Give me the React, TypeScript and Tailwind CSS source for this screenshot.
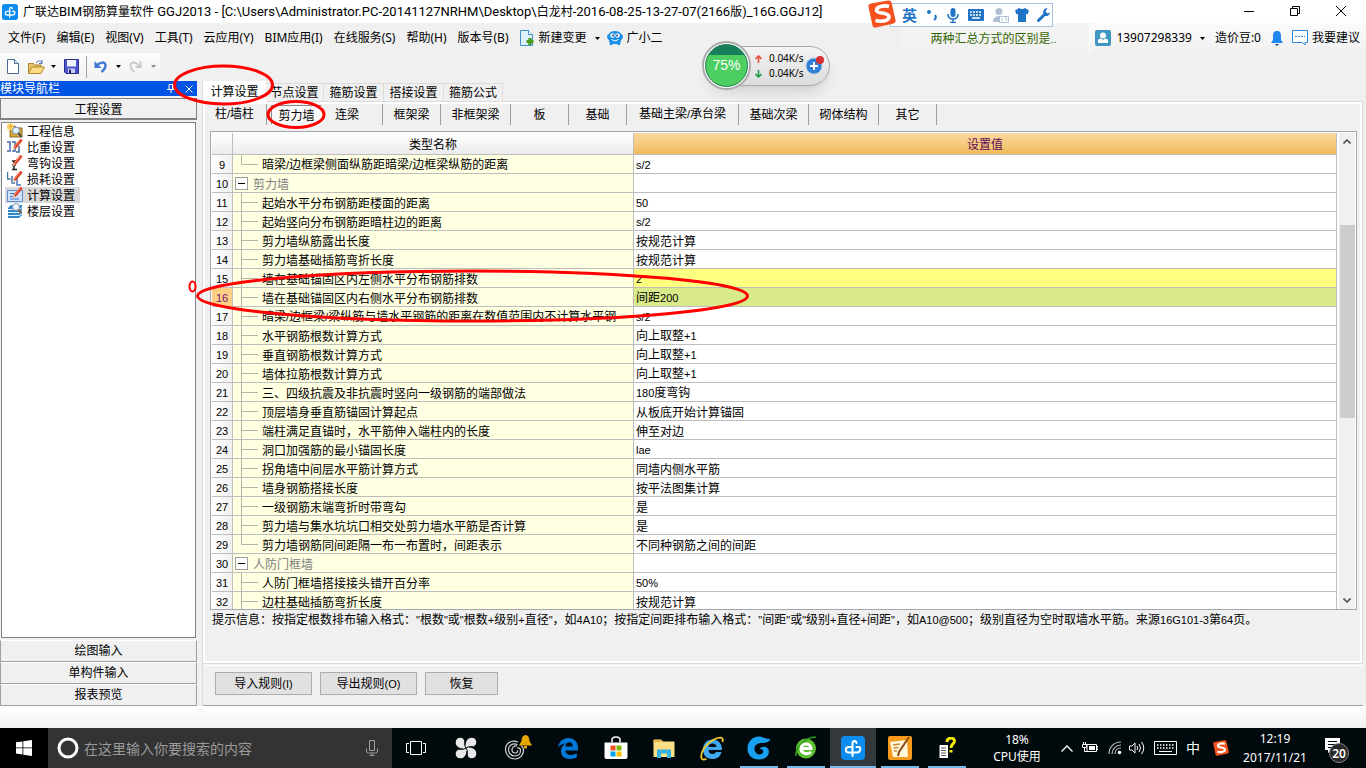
import React from "react";

/* ---------- text helpers ---------- */

const grid = "font-['Noto_Sans_CJK_SC',sans-serif] text-[12px]";
const ui = "font-['Noto_Sans','Noto_Sans_CJK_SC',sans-serif] text-[12px]";

/** Mixed text: Latin runs get their own face and size beside the Han characters. */
function T({ children, latin = "font-['Liberation_Sans',sans-serif] text-[11px]" }: { children: string; latin?: string }) {
  const parts = children.split(/([\x20-\x7e]+)/);
  return (
    <>
      {parts.map((p, i) =>
        i % 2 ? (
          <span key={i} className={latin}>
            {p}
          </span>
        ) : (
          p
        ),
      )}
    </>
  );
}

/* ---------- data ---------- */

const menus = ["文件(F)", "编辑(E)", "视图(V)", "工具(T)", "云应用(Y)", "BIM应用(I)", "在线服务(S)", "帮助(H)", "版本号(B)"];

type Row = { n: number; name: string; value: string; kind?: "group" | "last" };

const rows: Row[] = [
  { n: 9, name: "暗梁/边框梁侧面纵筋距暗梁/边框梁纵筋的距离", value: "s/2", kind: "last" },
  { n: 10, name: "剪力墙", value: "", kind: "group" },
  { n: 11, name: "起始水平分布钢筋距楼面的距离", value: "50" },
  { n: 12, name: "起始竖向分布钢筋距暗柱边的距离", value: "s/2" },
  { n: 13, name: "剪力墙纵筋露出长度", value: "按规范计算" },
  { n: 14, name: "剪力墙基础插筋弯折长度", value: "按规范计算" },
  { n: 15, name: "墙在基础锚固区内左侧水平分布钢筋排数", value: "2" },
  { n: 16, name: "墙在基础锚固区内右侧水平分布钢筋排数", value: "间距200" },
  { n: 17, name: "暗梁/边框梁/梁纵筋与墙水平钢筋的距离在数值范围内不计算水平钢", value: "s/2" },
  { n: 18, name: "水平钢筋根数计算方式", value: "向上取整+1" },
  { n: 19, name: "垂直钢筋根数计算方式", value: "向上取整+1" },
  { n: 20, name: "墙体拉筋根数计算方式", value: "向上取整+1" },
  { n: 21, name: "三、四级抗震及非抗震时竖向一级钢筋的端部做法", value: "180度弯钩" },
  { n: 22, name: "顶层墙身垂直筋锚固计算起点", value: "从板底开始计算锚固" },
  { n: 23, name: "端柱满足直锚时，水平筋伸入端柱内的长度", value: "伸至对边" },
  { n: 24, name: "洞口加强筋的最小锚固长度", value: "lae" },
  { n: 25, name: "拐角墙中间层水平筋计算方式", value: "同墙内侧水平筋" },
  { n: 26, name: "墙身钢筋搭接长度", value: "按平法图集计算" },
  { n: 27, name: "一级钢筋末端弯折时带弯勾", value: "是" },
  { n: 28, name: "剪力墙与集水坑坑口相交处剪力墙水平筋是否计算", value: "是" },
  { n: 29, name: "剪力墙钢筋同间距隔一布一布置时，间距表示", value: "不同种钢筋之间的间距", kind: "last" },
  { n: 30, name: "人防门框墙", value: "", kind: "group" },
  { n: 31, name: "人防门框墙搭接接头错开百分率", value: "50%" },
  { n: 32, name: "边柱基础插筋弯折长度", value: "按规范计算" },
];

const members: { label: string; w: string }[] = [
  { label: "框架梁", w: "w-[58px]" },
  { label: "非框架梁", w: "w-[70px]" },
  { label: "板", w: "w-[58px]" },
  { label: "基础", w: "w-[58px]" },
  { label: "基础主梁/承台梁", w: "w-[112px]" },
  { label: "基础次梁", w: "w-[70px]" },
  { label: "砌体结构", w: "w-[70px]" },
  { label: "其它", w: "w-[58px]" },
];

/* ---------- icons ---------- */

function GgjIcon({ className }: { className: string }) {
  return (
    <svg viewBox="0 0 24 24" className={className}>
      <rect width="24" height="24" rx="4" fill="#0d8cf0" />
      <g fill="none" stroke="#fff" strokeWidth="2" strokeLinecap="round">
        <path d="M15.500 7C15 4.200 11.500 4.200 11.500 7.500V20" />
        <path d="M11.500 11H7.500C4 11 4 16.500 7.500 16.500H16C19.500 16.500 20 12.500 18.500 11H15.500" />
      </g>
    </svg>
  );
}

function Caret({ color = "#000" }: { color?: string }) {
  return (
    <svg viewBox="0 0 5 3" className="h-[3px] w-[5px] shrink-0">
      <path d="M0 0h5L2.500 3z" fill={color} />
    </svg>
  );
}

function Pen() {
  return (
    <>
      <path d="M14.500 0.500L7.500 9" stroke="#e23c22" strokeWidth="3" />
      <path d="M13.500 0.500L7 8.500" stroke="#ff9a7c" strokeWidth="1" />
      <path d="M8.500 9.500L5 12l1.500-4z" fill="#e8c69a" />
    </>
  );
}

function SIcon({ className }: { className: string }) {
  return (
    <svg viewBox="0 0 28 28" className={className}>
      <path d="M3 3.500L20 0.500c2-.3 3 .5 3.500 2L27.500 20c.4 2-.4 3-2 3.500L8 27.500c-2 .4-3-.3-3.500-2L.5 7C0 5 1 4 3 3.500z" fill="#f4511e" />
      <path d="M21 6.500C16 5 8 6.500 8.500 10.500c.5 3.500 12 1.500 12.500 6 .4 4.500-7 5.500-13.500 4" fill="none" stroke="#fff" strokeWidth="3.600" />
    </svg>
  );
}

const navItems: { label: string; icon: React.ReactNode }[] = [
  {
    label: "工程信息",
    icon: (
      <>
        <path d="M3 3h5l1 2h6v9H3z" fill="#d9a63c" stroke="#8a6a20" />
        <path d="M0 1h7v6H0z" fill="#fbe89a" />
        <path d="M3.500 0v7M0 3.500h7M1 1l5 5M6 1L1 6" stroke="#f0b93a" />
        <circle cx="9" cy="7.500" r="3.500" fill="#dff0ff" stroke="#6f8fb5" />
        <path d="M11.500 10l3 4" stroke="#4a4a4a" strokeWidth="2" />
      </>
    ),
  },
  {
    label: "比重设置",
    icon: (
      <>
        <path d="M0 3h3v9H0M5 3h3v9H5M9 13h3V7" fill="none" stroke="#3f68a8" strokeWidth="1.500" />
        <Pen />
      </>
    ),
  },
  {
    label: "弯钩设置",
    icon: (
      <>
        <path d="M5 6h4M7 6v8M5 14.500h5M5 10h4" fill="none" stroke="#222" strokeWidth="1.500" />
        <Pen />
      </>
    ),
  },
  {
    label: "损耗设置",
    icon: (
      <>
        <path d="M0.500 1v7h3M5 5v7h3M10 8v6h4" fill="none" stroke="#4a74b4" strokeWidth="1.500" />
        <Pen />
      </>
    ),
  },
  {
    label: "计算设置",
    icon: (
      <>
        <path d="M0.500 3.500h15v11H.5z" fill="#cfe2fb" stroke="#5c8bd6" />
        <path d="M3 6.500h5M3 9.500h4M3 12h9" stroke="#3f74c8" />
        <Pen />
      </>
    ),
  },
  {
    label: "楼层设置",
    icon: (
      <>
        <path d="M4 2h11v10l-3 3H1V5z" fill="#2f86c8" />
        <path d="M1 6.500h11l3-2M1 9.500h11l3-2M1 12.500h11l3-2" fill="none" stroke="#dff2ff" />
        <circle cx="9" cy="4" r="3.500" fill="#e8f4ff" stroke="#7f97b0" />
        <path d="M11.500 7l3 3" stroke="#8a5a2a" strokeWidth="2" />
      </>
    ),
  },
];

/* ---------- window chrome ---------- */

function TitleBar() {
  return (
    <header className="flex h-[23px] shrink-0 items-center bg-white pl-[2px]">
      <GgjIcon className="size-4" />
      <h1 className={`${ui} ml-[5px] whitespace-nowrap leading-[20px]`}>
        <T latin="font-['Roboto',sans-serif] text-[13px]">
          {"广联达BIM钢筋算量软件 GGJ2013 - [C:\\Users\\Administrator.PC-20141127NRHM\\Desktop\\白龙村-2016-08-25-13-27-07(2166版)_16G.GGJ12]"}
        </T>
      </h1>
      <div className="ml-auto flex -translate-y-px">
        <button aria-label="最小化" className="flex h-[20px] w-[46px] items-center justify-center">
          <svg viewBox="0 0 10 10" className="size-[10px]"><path d="M0 5.500h10" stroke="#000" /></svg>
        </button>
        <button aria-label="还原" className="flex h-[20px] w-[46px] items-center justify-center">
          <svg viewBox="0 0 10 10" className="size-[10px]"><path d="M.5 2.500h7v7h-7zM2.500 2.500v-2h7v7h-2" fill="none" stroke="#000" /></svg>
        </button>
        <button aria-label="关闭" className="mr-[2px] flex h-[20px] w-[46px] items-center justify-center">
          <svg viewBox="0 0 10 10" className="size-[10px]"><path d="M0 0l10 10M10 0L0 10" stroke="#000" /></svg>
        </button>
      </div>
    </header>
  );
}

function MenuBar() {
  return (
    <nav className={`${ui} flex h-[30px] shrink-0 items-center whitespace-nowrap pl-2 leading-[28px]`}>
      <div className="flex gap-[11px]">
        {menus.map((m) => (
          <button key={m}>{m}</button>
        ))}
      </div>
      <button className="ml-[11px] flex items-center">
        <svg viewBox="0 0 14 16" className="h-4 w-[14px]">
          <path d="M.5.5h8l4 4v11H.5z" fill="#dff1fc" stroke="#3f8fc4" />
          <path d="M8.500.5v4h4" fill="#fff" stroke="#3f8fc4" />
          <path d="M10 8v7M6.500 11.500h7" stroke="#4a9a1a" strokeWidth="3.200" />
        </svg>
        <span className="ml-[5px] mr-[8px]">新建变更</span>
        <Caret />
      </button>
      <button className="ml-[7px] flex items-center gap-1">
        <svg viewBox="0 0 16 16" className="size-4">
          <path d="M2 4C3 0 13 0 14 4c3 1 2 5 0 6l-1 5q-2 .5-3-1H6q-1 1.500-3 1l-1-5C0 9-1 5 2 4z" fill="#1a8fe8" />
          <circle cx="5.500" cy="5.500" r="2.200" fill="#fff" /><circle cx="10.500" cy="5.500" r="2.200" fill="#fff" />
          <circle cx="6" cy="5.500" r="1" fill="#0b3f78" /><circle cx="10" cy="5.500" r="1" fill="#0b3f78" />
          <path d="M4.500 9.500q3.500 3 7 0" fill="none" stroke="#fff" />
        </svg>
        广小二
      </button>
      <div className="ml-auto flex self-stretch">
        <div className={`${grid} flex w-[188px] items-center bg-gradient-to-b from-[#f4f4f4] to-[#f1f1f1] pl-[29px] text-[#336600]`}>
          <a href="#tip"><T>两种汇总方式的区别是..</T></a>
        </div>
        <div className="flex items-center rounded-l border-l border-white bg-gradient-to-b from-[#fbfbfb] to-[#f0f0f0] pl-[5px] pr-[6px]">
          <svg viewBox="0 0 16 16" className="size-4">
            <rect width="16" height="16" rx="2" fill="#3f97c4" />
            <circle cx="8" cy="5.500" r="3" fill="#fff" />
            <path d="M3 13V9.500l3-1 2 1.500 2-1.500 3 1V13z" fill="#fff" />
          </svg>
          <button className="ml-[5px] flex items-center gap-2"><span>13907298339</span><Caret /></button>
          <span className="ml-[10px]">造价豆:0</span>
          <svg viewBox="0 0 12 15" className="ml-[10px] h-[15px] w-3">
            <path d="M6 0C3 0 2 2 2 5v4l-2 3h12l-2-3V5c0-3-1-5-4-5z" fill="#1e88f0" />
            <path d="M4 13h4l-2 2z" fill="#0a3f80" />
          </svg>
          <button className="ml-[9px] flex items-center gap-[4px]">
            <svg viewBox="0 0 16 16" className="size-4">
              <path d="M.5.500h15v12H13v2.500l-2.500-2.500H.5z" fill="#fff" stroke="#2f86d8" />
              <path d="M3 6.500h10" stroke="#2f86d8" strokeDasharray="2 1" />
            </svg>
            我要建议
          </button>
        </div>
      </div>
    </nav>
  );
}

function ToolBar() {
  return (
    <div className="flex h-[28px] shrink-0">
      <div className="flex h-[27px] w-[160px] items-center bg-gradient-to-b from-[#fbfbfb] to-[#f2f2f2] pl-[7px]">
        <button aria-label="新建">
          <svg viewBox="0 0 12 15" className="h-[15px] w-3"><path d="M.5.5h7l4 4v10H.5z" fill="#fff" stroke="#4a6a94" /><path d="M7.500.5v4h4" fill="#dbe8f6" stroke="#4a6a94" /></svg>
        </button>
        <button aria-label="打开" className="ml-[9px] flex items-center gap-[6px]">
          <svg viewBox="0 0 17 14" className="h-[14px] w-[17px]">
            <path d="M.5 13.500v-10h5l1 1.500H13v2" fill="#e8c46a" stroke="#a8842c" />
            <path d="M.5 13.500L4 7h12.500L13 13.500z" fill="#fadc86" stroke="#b48a2c" />
            <path d="M8 3c2-3 5-2.500 6 0m0-3v3.500h-3" fill="none" stroke="#4a74b0" />
          </svg>
          <Caret />
        </button>
        <button aria-label="保存" className="ml-[8px]">
          <svg viewBox="0 0 15 15" className="size-[15px]">
            <path d="M.5.5h14v14H2l-1.500-1.500z" fill="#4a55d0" stroke="#2a2f90" />
            <path d="M3 1h9v6.500H3z" fill="#f0f4fc" /><path d="M4 9.500h7V14H4z" fill="#c9cff0" /><path d="M5 10.500h2V14H5z" fill="#22286a" />
          </svg>
        </button>
        <div className="mx-[7px] h-[22px] w-px bg-[#a0a0a0]" />
        <button aria-label="撤销" className="flex items-center gap-[9px]">
          <svg viewBox="0 0 13 13" className="size-[13px]">
            <path d="M3 5.500C5.500 2.500 11 1 11.500 5c.2 3-1.500 5-4 7" fill="none" stroke="#3f78d0" strokeWidth="2.400" />
            <path d="M.5 1v7h7z" fill="#3f78d0" />
          </svg>
          <Caret />
        </button>
        <button aria-label="重做" className="ml-[8px] flex items-center gap-[9px]">
          <svg viewBox="0 0 13 13" className="size-[13px]">
            <path d="M11.500 1v6h-5M11 6.500C8 2 2 1 1.500 5c-.3 3 1.500 5 4 7" fill="none" stroke="#c8c8c8" strokeWidth="1.800" />
          </svg>
          <Caret color="#8a8a8a" />
        </button>
      </div>
    </div>
  );
}

/* ---------- left navigation ---------- */

const barButton = "h-[22px] w-full shrink-0 border border-[#a0a0a0] border-t-white bg-[#f0f0f0] pb-[3px] text-center leading-[16px]";

function SideNav() {
  return (
    <aside className={`${grid} flex w-[197px] shrink-0 flex-col leading-4`}>
      <div className="flex h-[15px] shrink-0 items-center bg-[#0054e3] pr-1 leading-[14px] text-white">
        <span className="h-[15px]">模块导航栏</span>
        <button aria-label="固定" className="ml-auto">
          <svg viewBox="0 0 8 9" className="h-[9px] w-2"><path d="M2 .5h4v5H2zM0 5.500h8M4 5.500V9M5.500.5v5" fill="none" stroke="#fff" /></svg>
        </button>
        <button aria-label="关闭导航" className="ml-[10px]">
          <svg viewBox="0 0 8 8" className="size-2"><path d="M.5.5l7 7M7.500.5l-7 7" stroke="#fff" /></svg>
        </button>
      </div>
      <button className="mt-[2px] h-[22px] w-full shrink-0 border border-[#808080] border-b-2 bg-[#f0f0f0] leading-[19px]">工程设置</button>
      <ul className="mx-[1px] mt-[2px] mb-[2px] min-h-0 flex-1 border border-[#808080] bg-white pl-[3px]">
        {navItems.map((it) => (
          <li key={it.label}>
            <a href="#nav" className={`flex h-4 w-[75px] items-center gap-[4px] pl-[2px] ${it.label === "计算设置" ? "bg-[#d9d9d9]" : ""}`}>
              <svg viewBox="0 0 16 16" className="size-4 shrink-0">{it.icon}</svg>
              <span className="whitespace-nowrap">{it.label}</span>
            </a>
          </li>
        ))}
      </ul>
      <button className={barButton}>绘图输入</button>
      <button className={barButton}>单构件输入</button>
      <button className={barButton}>报表预览</button>
    </aside>
  );
}

/* ---------- settings table ---------- */

function TreeCell({ row }: { row: Row }) {
  if (row.kind === "group") {
    return (
      <div className="flex h-[18px] items-center pl-[2px] text-[#808080]">
        <button aria-label="折叠" className="mr-[5px] flex size-[13px] items-center justify-center border border-[#a0a0a0] bg-white">
          <span className="h-px w-[7px] bg-black" />
        </button>
        {row.name}
      </div>
    );
  }
  return (
    <div className="flex h-[18px] items-center pl-2">
      <svg viewBox="0 0 17 18" className="mr-1 h-[18px] w-[17px] shrink-0">
        <path d={row.kind === "last" ? "M.5 0v9.500H17" : "M.5 0v18M.5 9.500H17"} fill="none" stroke="#b4b4a8" />
      </svg>
      <span className="overflow-hidden"><T>{row.name}</T></span>
    </div>
  );
}

function SettingsTable() {
  const line = "border-r border-b border-[#bebebe] p-0";
  return (
    <div className="flex min-h-0 flex-1 border border-[#a3a6ad] bg-white pt-px pl-px">
      <div className="min-w-0 flex-1 overflow-hidden">
        <table className={`${grid} w-full table-fixed border-separate border-spacing-0 whitespace-nowrap leading-[15px]`}>
          <colgroup>
            <col className="w-[21px]" />
            <col className="w-[401px]" />
            <col />
          </colgroup>
          <thead>
            <tr className="h-[22px]">
              <th className={`${line} bg-gradient-to-b from-white to-[#ececec]`} />
              <th className={`${line} bg-gradient-to-b from-white to-[#ececec] font-normal`}>类型名称</th>
              <th className={`${line} bg-gradient-to-b from-[#fad89f] to-[#f2bc5a] font-normal text-[#5a0a5a]`}>设置值</th>
            </tr>
          </thead>
          <tbody>
            {rows.map((r) => (
              <tr key={r.n} className="h-[19px]">
                <td className={`${line} text-center ${r.n === 16 ? "bg-[#ffcf86] text-[#6a1a6a]" : "bg-gradient-to-r from-white to-[#f0f0f0]"}`}>
                  <T>{String(r.n)}</T>
                </td>
                <td className={`${line} bg-[#ffffe1]`}><TreeCell row={r} /></td>
                <td className={`${line} pl-[2px] ${r.n === 15 ? "bg-[#ffff80]" : r.n === 16 ? "bg-[#d9ea8a]" : ""}`}>
                  <T>{r.value}</T>
                </td>
              </tr>
            ))}
          </tbody>
        </table>
      </div>
      <div className="ml-[2px] mr-px flex w-4 shrink-0 flex-col items-center bg-[#f0f0f0]">
        <button aria-label="向上滚动" className="flex h-[17px] items-center">
          <svg viewBox="0 0 8 5" className="h-[5px] w-2"><path d="M.5 4.500L4 1l3.500 3.500" fill="none" stroke="#505050" strokeWidth="1.600" /></svg>
        </button>
        <div className="mt-[75px] h-[193px] w-[15px] bg-[#cdcdcd]" />
        <button aria-label="向下滚动" className="mt-auto flex h-[17px] items-center">
          <svg viewBox="0 0 8 5" className="h-[5px] w-2"><path d="M.5.5L4 4l3.500-3.500" fill="none" stroke="#505050" strokeWidth="1.600" /></svg>
        </button>
      </div>
    </div>
  );
}

function Workspace() {
  const sep = "h-[21px] border-r border-[#a0a0a0]";
  const action = "h-[23px] border border-[#adadad] bg-[#e1e1e1] pb-[1px] leading-[18px]";
  return (
    <main className={`${grid} ml-[5px] flex min-w-0 flex-1 flex-col border-l border-[#dcdcdc] pr-[3px]`}>
      <div className="flex h-5 shrink-0 items-end whitespace-nowrap leading-[16px]">
        <button className="z-10 -mb-[2px] h-[22px] w-[63px] bg-white pb-[3px]">计算设置</button>
        {["节点设置", "箍筋设置", "搭接设置", "箍筋公式"].map((t, i) => (
          <button key={t} className={`h-[18px] border-t border-r border-[#dcdcdc] pb-[1px] ${i === 0 ? "w-[58px]" : i === 3 ? "w-[59px]" : "w-[60px]"}`}>{t}</button>
        ))}
      </div>
      <section className="flex min-h-0 flex-1 flex-col border border-l-0 border-[#dcdcdc]">
        <div className="flex min-h-0 flex-1 flex-col border-2 border-white pb-[32px]">
          <div className="flex shrink-0 items-center whitespace-nowrap text-center leading-[18px]">
            <button className={`${sep} w-[62px] pr-[2px] pb-[2px]`}><T>柱/墙柱</T></button>
            <button className="mx-[4px] h-[20px] w-[51px] border border-[#888] border-r-white border-b-white bg-[#f8f8f8] leading-[18px]">剪力墙</button>
            <button className={`${sep} w-[57px] pr-[14px] pb-[2px]`}>连梁</button>
            {members.map((m) => (
              <button key={m.label} className={`${sep} ${m.w} pb-[2px]`}><T>{m.label}</T></button>
            ))}
          </div>
          <div className="flex min-h-0 flex-1 flex-col pt-[6px] pr-[3px] pl-[5px]">
            <SettingsTable />
            <p className="shrink-0 whitespace-nowrap pl-[2px] leading-[17px]">
              <T>{'提示信息：按指定根数排布输入格式："根数"或"根数+级别+直径"，如4A10；按指定间距排布输入格式："间距"或"级别+直径+间距"，如A10@500；级别直径为空时取墙水平筋。来源16G101-3第64页。'}</T>
            </p>
          </div>
        </div>
      </section>
      <div className="mt-px flex h-[41px] shrink-0 items-start gap-2 border-t border-b border-t-white border-b-[#a0a0a0] pt-[6px] pl-[12px]">
        <button className={`${action} w-[97px]`}><T>导入规则(I)</T></button>
        <button className={`${action} w-[97px]`}><T>导出规则(O)</T></button>
        <button className={`${action} w-[73px]`}>恢复</button>
      </div>
    </main>
  );
}

/* ---------- taskbar ---------- */

function Slot({ label, w, state, children }: { label: string; w: string; state?: "open" | "active"; children: React.ReactNode }) {
  return (
    <button aria-label={label} className={`flex h-full shrink-0 flex-col items-center ${w} ${state === "active" ? "bg-[#33393c]" : ""}`}>
      <span className="flex flex-1 items-center">{children}</span>
      <span className={`-mt-[2px] h-[2px] ${state === "active" ? "w-full bg-[#76b9ed]" : state === "open" ? "w-[38px] bg-[#76b9ed]" : ""}`} />
    </button>
  );
}

function Taskbar() {
  return (
    <footer className={`${ui} flex h-10 shrink-0 items-center overflow-hidden bg-[#00090c] text-white`}>
      <button aria-label="开始" className="flex h-full w-12 shrink-0 items-center justify-center bg-black">
        <svg viewBox="0 0 16 16" className="size-4"><path d="M0 2.300l6.500-.9v6.100H0zM7.300 1.300L16 0v7.500H7.300zM0 8.300h6.500v6.200L0 13.600zM7.300 8.300H16V16l-8.700-1.300z" fill="#fff" /></svg>
      </button>
      <label className="flex h-full w-[344px] shrink-0 items-center bg-[#333] pr-[14px] pl-[9px]">
        <svg viewBox="0 0 22 22" className="size-[22px] shrink-0"><circle cx="11" cy="11" r="9" fill="none" stroke="#fff" strokeWidth="3" /></svg>
        <input aria-label="搜索" placeholder="在这里输入你要搜索的内容" className="ml-[5px] min-w-0 flex-1 bg-transparent text-[14px] placeholder:text-[#9a9a9a] outline-none" />
        <svg viewBox="0 0 12 16" className="h-4 w-3 shrink-0"><path d="M3.500.5h5v10h-5zM.5 8.500v2.500q0 2 2 2h7q2 0 2-2V8.500M6 13v2.500M3.500 15.500h5" fill="none" stroke="#a0a0a0" /></svg>
      </label>
      <Slot label="任务视图" w="w-12">
        <svg viewBox="0 0 20 14" className="h-[14px] w-5"><path d="M4.500.5h11v13h-11zM3 2.500H.5v9H3M17 2.500h2.500v9H17" fill="none" stroke="#fff" /></svg>
      </Slot>
      <Slot label="风扇" w="w-[52px]">
        <svg viewBox="0 0 22 22" className="size-[22px]">
          {[0, 90, 180, 270].map((a) => (
            <path key={a} transform={`rotate(${a} 11 11)`} d="M10.800 10.800C8.500 12 5.500 11.500 3.500 10.200 1.500 9 .7 7.500.7 5.200.7 2.500 2.500.7 5.200.7 8 .7 9.300 2.500 9.500 4.800c.2 2.400 0 4.300 1.300 6z" fill="#e8e8e8" />
          ))}
          <path d="M8 8h6v6H8z" fill="#e8e8e8" />
          <path d="M11 11C9 8.500 9.500 5 10.700 2M11 11c2.500-2 6-1.500 9-.3M11 11c2 2.500 1.500 6 .3 9M11 11c-2.500 2-6 1.500-9 .3" fill="none" stroke="#00090c" />
        </svg>
      </Slot>
      <Slot label="浏览器提醒" w="w-[52px]">
        <svg viewBox="0 0 28 26" className="h-[26px] w-7">
          <g fill="none" stroke="#d8d8d8" strokeWidth="1.200">
            <path d="M14 7C7 4 1.500 9 1.500 14.500S6 24 11 24s8.500-4 8.500-8.500c0-3-1-4-2.500-4.500" />
            <path d="M13.500 9.500C8 7.500 4.500 11 4.500 14.800c0 3.500 3 6.200 6.500 6.200s5.500-2.500 5.500-5.500c0-2-1.500-3-3.500-2.500M13 11c-3-.5-5 1.500-5 3.800 0 2 1.500 3.200 3.200 3.200 1.500 0 2.800-1 2.300-2.500" />
          </g>
          <path d="M21.500 0c-3 .5-4 3-4 6l-2.500 4.500h13L25.500 6c0-3-1-5.500-4-6zM20 11h3v2.500h-3z" fill="#e5a800" />
        </svg>
      </Slot>
      <Slot label="Edge" w="w-12">
        <svg viewBox="0 0 20 21" className="h-[21px] w-5"><path d="M0 9.500C1 3.500 5 0 10.500 0 16.500 0 20 4.500 20 9.500v3H7.300c.2 3 2.700 4.500 5.700 4.500 2 0 4-.6 5.800-1.700v4C17 20.500 14.500 21 12 21c-5.500 0-9-3-9-8 0-3.500 2-6 4.500-7.500C4.500 5.700 1.500 7 0 9.500zM7.500 8.500h7.200c0-2.500-1-4.200-3.400-4.200-2.300 0-3.500 2-3.800 4.200z" fill="#0078d7" /></svg>
      </Slot>
      <Slot label="应用商店" w="w-12">
        <svg viewBox="0 0 24 24" className="size-6">
          <path d="M8 6.500V4q0-3 4-3t4 3v2.500" fill="none" stroke="#fff" strokeWidth="1.500" />
          <path d="M.5 6.500h23V21q0 2-2 2h-19q-2 0-2-2z" fill="#fff" />
          <path d="M6.500 9.500h5v5h-5z" fill="#f25022" /><path d="M12.500 9.500h5v5h-5z" fill="#7fba00" /><path d="M6.500 15.500h5v5h-5z" fill="#00a4ef" /><path d="M12.500 15.500h5v5h-5z" fill="#ffb900" />
        </svg>
      </Slot>
      <Slot label="资源管理器" w="w-12">
        <svg viewBox="0 0 22 19" className="h-[19px] w-[22px]">
          <path d="M.5 1q0-.5.5-.5h7L10 2.500h11q.5 0 .5.500v15H.5z" fill="#fbdf86" /><path d="M.5 1h8v2h-8z" fill="#e8b93e" />
          <path d="M4 10.500h14V19h-4v-4.500H8V19H4z" fill="#35b3e6" />
        </svg>
      </Slot>
      <Slot label="IE" w="w-12">
        <svg viewBox="0 0 24 25" className="h-[25px] w-6">
          <path d="M12.500 3.500c5.500 0 9.500 4 9.500 10.500H8.500c.3 3 2 4 4 4 1.700 0 3-.7 3.500-2h5.500c-1 4.500-4.500 7-9 7-6 0-9.500-4-9.500-9.500 0-6 4-10 9.500-10zM8.500 11h8c-.2-2.300-1.700-3.500-4-3.500s-3.700 1.300-4 3.500z" fill="#3fa9f0" />
          <path d="M22.500 6C24 .5 19 .5 13 4 6 8 0 16 1.500 22c.5 2 2.500 2 5 .8" fill="none" stroke="#f4c92c" strokeWidth="1.800" />
        </svg>
      </Slot>
      <Slot label="浏览器" w="w-[46px]" state="open">
        <svg viewBox="0 0 24 24" className="size-6">
          <path d="M23.500 3c-1.500 3-4.500 4-8 4C10.500 7 7.500 9 7.500 12.800c0 3.200 2.200 5.700 5 5.700 2.300 0 3.700-1.500 3.700-3.200 0-1.800-1.500-2.600-3.500-2.300 1.500-2.500 6-3 8-.5C24 16 20.500 23.500 12 23.500 5 23.500.5 19 .5 12.500.5 5.500 5.500.5 12 .5c4 0 6.500 3 11.500 2.500z" fill="#18a0f0" />
        </svg>
      </Slot>
      <Slot label="360浏览器" w="w-12" state="open">
        <svg viewBox="0 0 22 24" className="h-6 w-[22px]">
          <circle cx="11" cy="12.500" r="10" fill="#5cc030" />
          <path d="M1 20C0 12 10 1 21 1" fill="none" stroke="#2c9a1c" strokeWidth="1.500" />
          <path d="M6 12.500h10c0-6-10-6-10 0s7.500 6 10 3.500" fill="none" stroke="#fff" strokeWidth="3" />
        </svg>
      </Slot>
      <Slot label="GGJ2013" w="w-[46px]" state="active"><GgjIcon className="size-6" /></Slot>
      <Slot label="便签" w="w-12" state="open">
        <svg viewBox="0 0 24 26" className="h-[26px] w-6">
          <rect y="1" width="24" height="24" rx="2" fill="#f59a1c" /><path d="M2 7l17-2 1 17H5z" fill="#fff8dc" />
          <path d="M5 10l7-1M5.500 13l5-.5M6 16h3" stroke="#d08a3a" strokeWidth="1.300" /><path d="M21 2L11 17l-1 4" fill="none" stroke="#8a4a14" strokeWidth="2" />
        </svg>
      </Slot>
      <Slot label="帮助文档" w="w-[46px]" state="open">
        <svg viewBox="0 0 17 22" className="h-[22px] w-[17px]">
          <path d="M.5 8h8.500v13H.5z" fill="#fff" /><path d="M2 11h5M2 13.500h5M2 16h5M2 18.500h5" stroke="#555" />
          <path d="M8 5c0-5 7.500-5 7.500-1C15.500 7 12 7 12 11M12 13v2.500" fill="none" stroke="#f5e800" strokeWidth="3" />
        </svg>
      </Slot>
      <div className="ml-auto flex h-full shrink-0 items-center">
        <div className="w-[60px] text-center leading-[17px]">18%<br />CPU使用</div>
        <svg viewBox="0 0 12 7" className="ml-[14px] h-[7px] w-3"><path d="M.5 6.500L6 1l5.500 5.500" fill="none" stroke="#fff" strokeWidth="1.300" /></svg>
        <svg viewBox="0 0 16 14" className="ml-[9px] h-[14px] w-4"><path d="M5 3.500h9.500v7H5zM14.500 5.500H16v3h-1.500M.5 3.500h4v3h-4zM1.500 1v2M3.500 1v2M2.500 6.500v4H5" fill="none" stroke="#fff" /><path d="M7 5h6v4H7z" fill="#fff" /></svg>
        <svg viewBox="0 0 14 14" className="ml-[10px] size-[14px]">
          <g fill="none" stroke="#bbb" strokeWidth="1.200"><path d="M1 13C1 6 6 1 13 1M4 13c0-5 4-9 9-9M7 13c0-3.500 2.500-6 6-6" /></g><circle cx="11.500" cy="11.500" r="1.800" fill="#fff" />
        </svg>
        <svg viewBox="0 0 16 14" className="ml-[7px] h-[14px] w-4"><path d="M.5 5h2.500l3-3v10l-3-3H.5zM8 5q1.500 2 0 4M10 3q3 4 0 8M12.500 1q4.500 6 0 12" fill="none" stroke="#fff" /></svg>
        <svg viewBox="0 0 23 14" className="ml-[9px] h-[14px] w-[23px]"><path d="M.5.5h22v13H.5z" fill="none" stroke="#fff" /><path d="M3 4h17M3 7h17" stroke="#fff" strokeWidth="1.500" strokeDasharray="1.500 1.500" /><path d="M5 10.500h13" stroke="#fff" /></svg>
        <span className="ml-[9px] text-[14px] leading-[18px]">中</span>
        <SIcon className="ml-[13px] size-4" />
        <div className="ml-[11px] w-[70px] text-center leading-[19px]">12:19<br />2017/11/21</div>
        <button aria-label="通知" className="ml-[14px] flex h-full w-[42px] items-center">
          <svg viewBox="0 0 30 30" className="mt-1 size-[30px]">
            <path d="M1 3h15v12H7l-3 3v-3H1z" fill="#fff" /><path d="M4 6.500h9M4 9.500h9M4 12.500h6" stroke="#00090c" />
            <circle cx="15" cy="18" r="9.500" fill="#2a2a2a" stroke="#888" />
            <text x="15" y="22.500" textAnchor="middle" fill="#fff" fontSize="12" fontWeight="600" fontFamily="Noto Sans, sans-serif">20</text>
          </svg>
        </button>
      </div>
    </footer>
  );
}

/* ---------- floating items ---------- */

function SogouBar() {
  return (
    <div className="absolute top-0 left-[868px] z-20 flex h-[27px] items-start">
      <SIcon className="z-10 size-7 shrink-0" />
      <div className="-ml-[6px] mt-[3px] flex h-6 w-[163px] items-center gap-[9px] border border-[#a8c4dc] bg-white pl-[11px] text-[#1f74c8]">
        <span className="font-['Noto_Sans_CJK_SC',sans-serif] text-[15px] leading-[20px] font-bold">英</span>
        <svg viewBox="0 0 12 12" className="h-3 w-3"><circle cx="3" cy="3" r="2" fill="#1f74c8" /><path d="M9 6q2 3-1 5" fill="none" stroke="#1f74c8" strokeWidth="2" /></svg>
        <svg viewBox="0 0 12 15" className="h-[15px] w-3"><rect x="3.500" width="5" height="9" rx="2.500" fill="#1f74c8" /><path d="M1 6q0 5 5 5t5-5M6 11v3.500M3 14.500h6" fill="none" stroke="#1f74c8" strokeWidth="1.500" /></svg>
        <svg viewBox="0 0 16 12" className="h-3 w-4"><rect width="16" height="12" rx="1" fill="#1f74c8" /><path d="M2 3h12M2 6h12" stroke="#fff" strokeWidth="1.500" strokeDasharray="2 1" /><path d="M4 9h8" stroke="#fff" strokeWidth="1.500" /></svg>
        <svg viewBox="0 0 16 15" className="h-[15px] w-4"><circle cx="6" cy="3.500" r="3.500" fill="#aebfd6" /><path d="M0 14q0-6 6-6t5 6z" fill="#aebfd6" /><path d="M6.500 8.500h9v6h-9z" fill="#fff" stroke="#aebfd6" /><path d="M9 10v3M11.500 10h2v3" fill="none" stroke="#aebfd6" /></svg>
        <svg viewBox="0 0 14 14" className="-ml-[3px] size-[14px]"><path d="M4 0q3 2 6 0l4 2.500-1.500 4L11 6v8H3V6l-1.500.5L0 2.500z" fill="#1f74c8" /></svg>
        <svg viewBox="0 0 14 14" className="-ml-px size-[14px]"><path d="M1.500 12.500L8 6" stroke="#1f74c8" strokeWidth="3" strokeLinecap="round" /><path d="M10.500 0C7 0 5.500 3 6.500 6s5 3 7-1.500l-3 1-2-2z" fill="#1f74c8" /></svg>
      </div>
    </div>
  );
}

function SpeedBall() {
  return (
    <div className="absolute top-[46px] left-[705px] z-20 h-10 w-[125px] rounded-full border border-[#aaa] bg-gradient-to-b from-[#f4f4f4] to-[#dcdcdc] shadow-lg">
      <div className="absolute -top-[6px] -left-[4px] flex size-[49px] items-center justify-center rounded-full border-2 border-[#aaa] bg-white">
        <div className="flex size-[43px] items-center justify-center rounded-full border border-[#1c7a4a] bg-gradient-to-b from-[#17805a] from-25% to-[#4ccf60] to-25% font-['Liberation_Sans',sans-serif] text-[14px] text-white">75%</div>
      </div>
      <div className="flex h-full flex-col justify-center pl-[49px] font-['Noto_Sans',sans-serif] text-[10px] leading-[15px]">
        {["M3.500 8V2M.5 4l3-3 3 3", "M3.500 0v6M.5 4l3 3 3-3"].map((d, i) => (
          <div key={d} className="flex items-center gap-[7px]">
            <svg viewBox="0 0 7 8" className="h-2 w-[7px]"><path d={d} fill="none" stroke={i ? "#1f9a4c" : "#e8503a"} strokeWidth="1.600" /></svg>
            0.04K/s
          </div>
        ))}
      </div>
      <svg viewBox="0 0 20 20" className="absolute top-[8px] right-[4px] size-5">
        <circle cx="9" cy="11" r="8" fill="#2f7fd8" stroke="#b8c8dc" /><path d="M9 7v8M5 11h8" stroke="#fff" strokeWidth="2" /><circle cx="15" cy="5" r="4" fill="#d83030" />
      </svg>
    </div>
  );
}

function Markup() {
  return (
    <svg viewBox="0 0 760 340" className="pointer-events-none absolute top-0 left-0 z-30 h-[340px] w-[760px]">
      <g fill="none" stroke="#f00" strokeWidth="3">
        <ellipse cx="223.500" cy="85" rx="49" ry="19" />
        <ellipse cx="296" cy="114.500" rx="28" ry="13" />
        <ellipse cx="472.500" cy="296" rx="275" ry="25" />
        <ellipse cx="192.500" cy="286.500" rx="3" ry="5" strokeWidth="2" />
      </g>
    </svg>
  );
}

export default function App() {
  return (
    <div className="relative flex h-screen flex-col overflow-hidden bg-[#f0f0f0] text-black">
      <TitleBar />
      <MenuBar />
      <ToolBar />
      <div className="flex min-h-0 flex-1">
        <SideNav />
        <Workspace />
      </div>
      <div className="h-[22px] shrink-0 bg-gradient-to-b from-white to-[#f2f2f2]" />
      <Taskbar />
      <SogouBar />
      <SpeedBall />
      <Markup />
    </div>
  );
}
